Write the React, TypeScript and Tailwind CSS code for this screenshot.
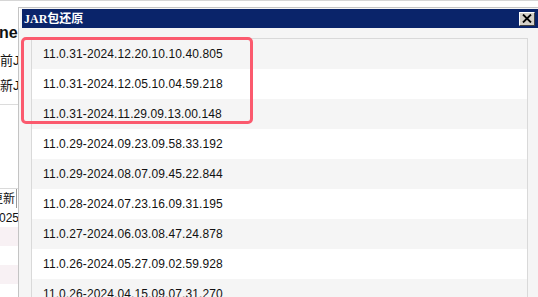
import React from "react";

const items = [
  "11.0.31-2024.12.20.10.10.40.805",
  "11.0.31-2024.12.05.10.04.59.218",
  "11.0.31-2024.11.29.09.13.00.148",
  "11.0.29-2024.09.23.09.58.33.192",
  "11.0.29-2024.08.07.09.45.22.844",
  "11.0.28-2024.07.23.16.09.31.195",
  "11.0.27-2024.06.03.08.47.24.878",
  "11.0.26-2024.05.27.09.02.59.928",
  "11.0.26-2024.04.15.09.07.31.270",
];

export default function App() {
  return (
    <div className="relative w-[538px] h-[297px] overflow-hidden bg-white font-['Liberation_Sans','Noto_Sans_CJK_SC',sans-serif] text-[#111]">
      <div className="h-[1px] bg-[#d6d6d6]" />
      {/* background page (visible strip) */}
      <div className="flex flex-col w-[18px] overflow-hidden">
        <div className="pt-[22px] ml-[-1px] text-[16px] leading-[20px] font-bold whitespace-nowrap">ne</div>
        <div className="mt-[8px] text-[13px] leading-[20px] whitespace-nowrap">前JA</div>
        <div className="mt-[5px] text-[13px] leading-[20px] whitespace-nowrap">新JA</div>
        <div className="mt-[8px] h-[1px] w-[18px] bg-[#dcdcdc]" />
        <div className="mt-[83px] w-[18px] border-t border-[#dadada]">
          <div className="h-[19px] flex items-center justify-end border-r border-[#9a9a9a] w-[17px] overflow-hidden text-[12px] whitespace-nowrap">
            <span className="pr-[1px]">更新</span>
          </div>
          <div className="h-[19px] flex items-center overflow-hidden text-[12px] whitespace-nowrap">
            <span className="ml-[-1px]">025</span>
          </div>
          <div className="h-[19px] bg-[#f8f1f4]" />
          <div className="h-[19px] bg-white" />
          <div className="h-[19px] bg-[#f8f1f4]" />
          <div className="h-[19px] bg-white" />
        </div>
      </div>

      {/* dialog window */}
      <div className="absolute left-[18px] top-[7px] w-[522px] h-[300px] border border-[#c4c4c4] bg-[#f5f5f5] flex flex-col">
        <div className="pl-[2px] pt-[1px] border-l border-white">
          <div className="h-[19px] bg-[#0a246a] flex items-center pl-[2px] pr-[4px]">
            <span className="text-white font-bold text-[12px] leading-[14px] font-['Liberation_Serif','Noto_Sans_CJK_SC',serif] whitespace-nowrap">
              JAR包还原
            </span>
            <div className="ml-auto w-[16px] h-[14px] bg-[#d4d0c8] border-t border-l border-white border-r border-b border-r-[#404040] border-b-[#404040] flex items-center justify-center">
              <svg width="10" height="9" viewBox="0 0 10 9">
                <path d="M1 0.5 L9 8.5 M9 0.5 L1 8.5" stroke="#000" strokeWidth="1.8" />
              </svg>
            </div>
          </div>
        </div>
        <div className="pl-[12px] pt-[10px]">
          <div className="w-[497px] border border-[#d9d9d9] bg-white">
            {items.map((t, i) => (
              <div
                key={t}
                className={`h-[30px] flex items-center pl-[11px] text-[12px] tracking-[0.1px] text-[#111] ${
                  i % 2 === 0 ? "bg-[#f5f5f5]" : "bg-white"
                }`}
              >
                {t}
              </div>
            ))}
          </div>
        </div>
      </div>

      {/* red highlight */}
      <div className="absolute left-[21px] top-[37px] w-[232px] h-[87px] border-[3px] border-[#fb5a6e] rounded-[5px]" />
    </div>
  );
}
